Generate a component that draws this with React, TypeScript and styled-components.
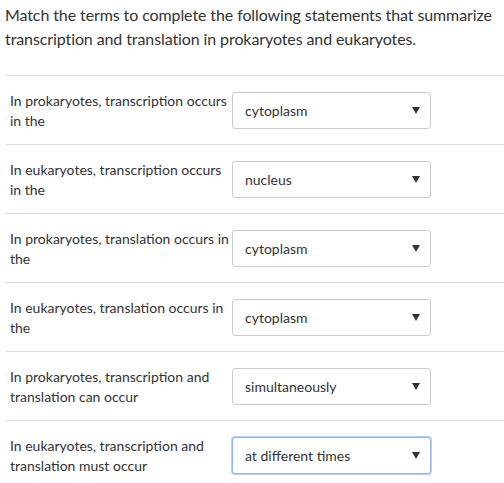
import React from 'react';
import styled, { createGlobalStyle } from 'styled-components';

const GlobalStyle = createGlobalStyle`
  body {
    margin: 0;
    background: #fff;
    font-family: Lato, "Open Sans", sans-serif;
    color: #333;
  }
`;

const Page = styled.div`
  padding: 3px 0 0 5px;
`;

const Prompt = styled.p`
  margin: 0 0 24px;
  font-size: 16px;
  line-height: 24px;
  letter-spacing: -0.1px;
  color: #333;
`;

const List = styled.div`
  border-top: 1px solid #ddd;
`;

const Row = styled.div`
  display: flex;
  align-items: center;
  gap: 2px;
  padding: 13px 0 13px 5px;
  border-bottom: 1px solid #ddd;

  &:last-child {
    border-bottom: none;
  }
`;

const Label = styled.div`
  width: 220px;
  padding-top: 2px;
  font-size: 14px;
  line-height: 20px;
  color: #333;
`;

const Select = styled.div<{ $focused?: boolean }>`
  width: 199px;
  height: 37px;
  box-sizing: border-box;
  display: flex;
  align-items: center;
  justify-content: space-between;
  padding: 0 10px 0 12px;
  border: 1px solid ${(p) => (p.$focused ? '#8fb4f0' : '#ccc')};
  box-shadow: ${(p) => (p.$focused ? '0 0 0 1px #b9d0f5' : 'none')};
  border-radius: 3px;
  font-size: 14px;
  color: #333;
  background: #fff;
`;

const Arrow = styled.svg`
  width: 8px;
  height: 7px;
  fill: #333;
`;

const items = [
  { label: 'In prokaryotes, transcription occurs in the', value: 'cytoplasm' },
  { label: 'In eukaryotes, transcription occurs in the', value: 'nucleus' },
  { label: 'In prokaryotes, translation occurs in the', value: 'cytoplasm' },
  { label: 'In eukaryotes, translation occurs in the', value: 'cytoplasm' },
  { label: 'In prokaryotes, transcription and translation can occur', value: 'simultaneously' },
  { label: 'In eukaryotes, transcription and translation must occur', value: 'at different times', focused: true },
];

const App: React.FC = () => {
  return (
    <>
      <GlobalStyle />
      <Page>
        <Prompt>
          Match the terms to complete the following statements that summarize transcription and
          translation in prokaryotes and eukaryotes.
        </Prompt>
        <List>
          {items.map((item, i) => (
            <Row key={i}>
              <Label>{item.label}</Label>
              <Select $focused={item.focused}>
                <span>{item.value}</span>
                <Arrow viewBox="0 0 8 7">
                  <path d="M0 0H8L4 7Z" />
                </Arrow>
              </Select>
            </Row>
          ))}
        </List>
      </Page>
    </>
  );
};

export default App;
